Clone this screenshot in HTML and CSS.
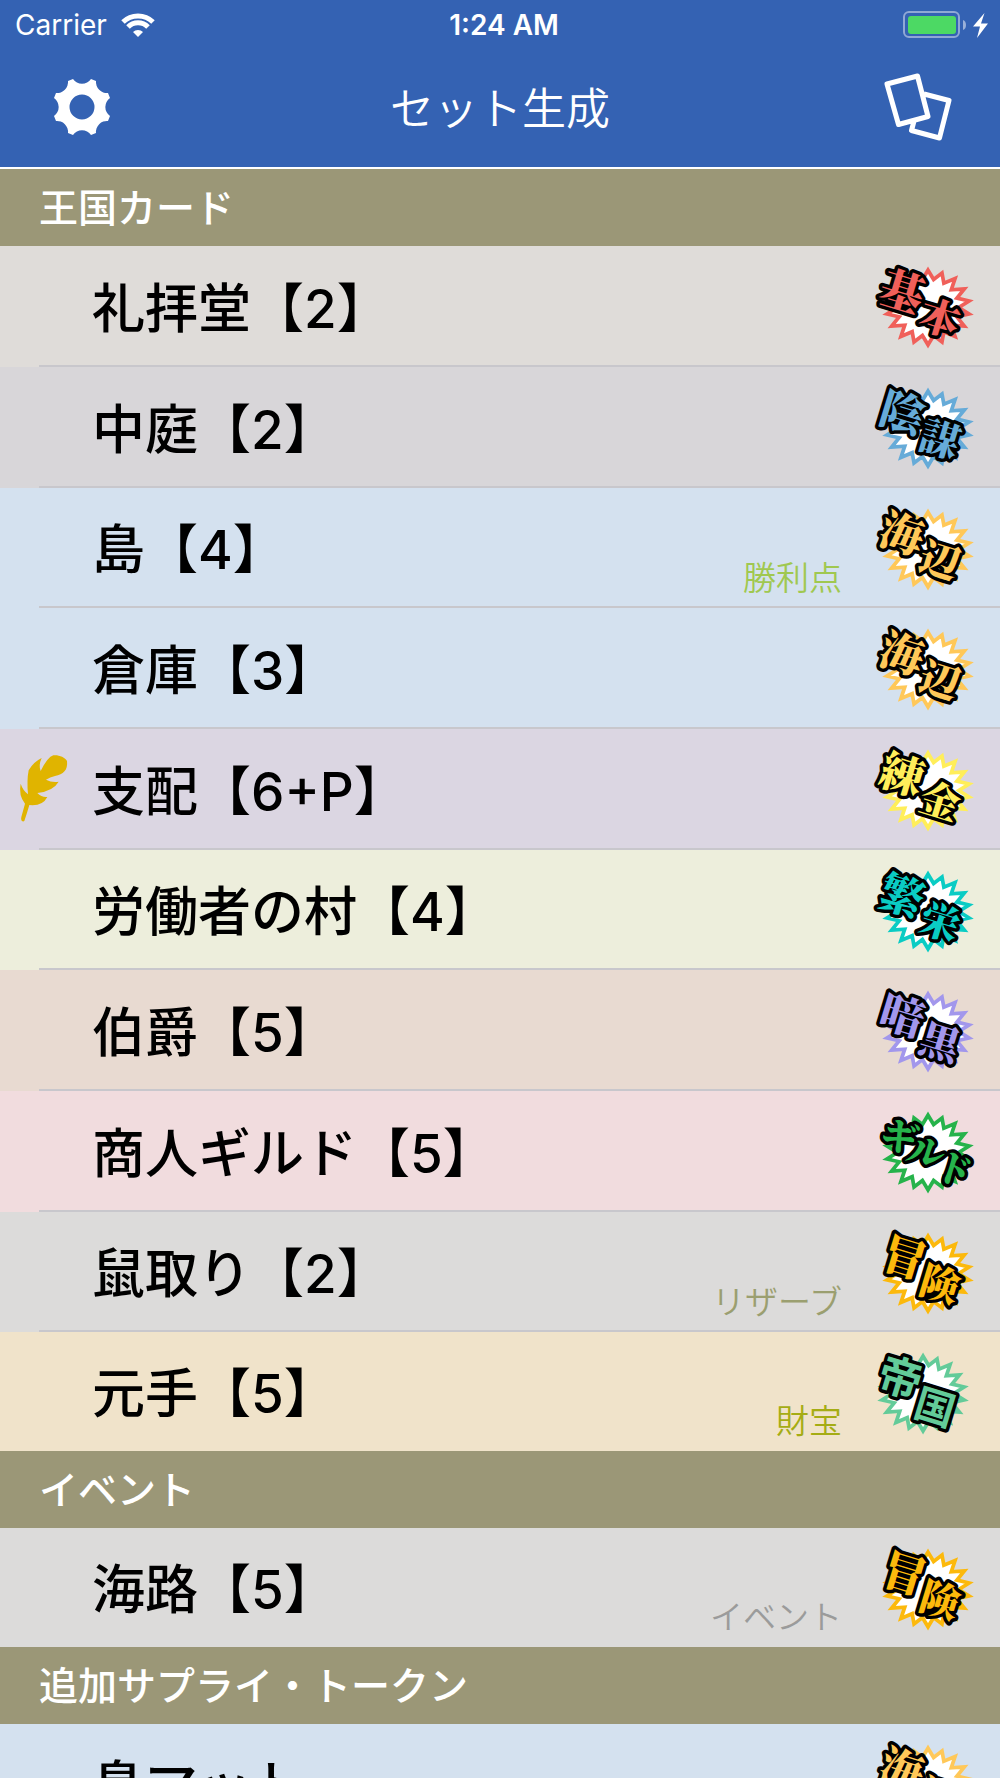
FILE: index.html
```html
<!DOCTYPE html>
<html lang="ja">
<head>
<meta charset="utf-8">
<meta name="viewport" content="width=device-width, initial-scale=1">
<title>セット生成</title>
<link rel="stylesheet" href="styles.css">
</head>
<body>
<svg class="defs" aria-hidden="true">
  <symbol id="burst" viewBox="-50 -50 100 100">
    <polygon transform="scale(.94)" points="0,-40 6,-30 15,-37 17,-26 29,-31 25,-19 39,-20 31,-10 44,-7 33,0 44,7 31,10 39,20 25,19 29,31 17,26 15,37 6,30 0,40 -6,30 -15,37 -17,26 -29,31 -25,19 -39,20 -31,10 -44,7 -33,0 -44,-7 -31,-10 -39,-20 -25,-19 -29,-31 -17,-26 -15,-37 -6,-30"/>
  </symbol>
</svg>
<div class="app">
  <header class="top">
    <div class="status">
      <div class="carrier">
        <span>Carrier</span>
        <svg width="34" height="24" viewBox="-17 -24 34 24" fill="none" stroke="#fff" stroke-width="5">
          <path d="M-15-15A21.5 21.5 0 0 1 15-15M-10-10A14 14 0 0 1 10-10"/>
          <path d="M0 0L-5-5A7 7 0 0 1 5-5Z" fill="#fff" stroke="none"/>
        </svg>
      </div>
      <div class="time">1:24 AM</div>
      <div class="battery">
        <svg width="86" height="28" viewBox="0 0 86 28">
          <rect x="1" y="1" width="55" height="25" rx="5" fill="none" stroke="#fff" stroke-opacity=".45" stroke-width="2"/>
          <rect x="5" y="5" width="48" height="18" rx="3" fill="#4cd964"/>
          <path d="M60 9q3 1 3 5t-3 5z" fill="#fff" fill-opacity=".5"/>
          <path d="M81.500 2L70 15.500h7L74 27 85 12.500h-7z" fill="#fff"/>
        </svg>
      </div>
    </div>
    <nav class="nav">
      <button class="icon" type="button" aria-label="設定">
        <svg width="64" height="64" viewBox="-32 -32 64 64" fill="#fff" fill-rule="evenodd">
          <path d="M-9-28A11 11 0 0 0 9-28L14-26A11 11 0 0 0 26-14L28-9A11 11 0 0 0 28 9L26 14A11 11 0 0 0 14 26L9 28A11 11 0 0 0-9 28L-14 26A11 11 0 0 0-26 14L-28 9A11 11 0 0 0-28-9L-26-14A11 11 0 0 0-14-26ZM-12.500 0a12.500 12.500 0 1 0 25 0a12.500 12.500 0 1 0-25 0Z"/>
        </svg>
      </button>
      <h1>セット生成</h1>
      <button class="icon" type="button" aria-label="カード">
        <svg width="72" height="72" viewBox="882 70 72 72" fill="none" stroke="#fff" stroke-width="5" stroke-linejoin="round">
          <path d="M887 83L917.500 75L928 115.500L898.500 123.500ZM924 93L949 99.500L939.500 137L911.500 129.500L914 120"/>
        </svg>
      </button>
    </nav>
  </header>

  <main>
    <h2>王国カード</h2>
    <ul>
      <li class="base">
        <span class="mark"></span><span class="name">礼拝堂【2】</span><span class="kind"></span>
        <svg class="badge" viewBox="0 0 140 120"><use href="#burst" x="18" y="12" width="100" height="100"/><g><text transform="translate(43 43) rotate(17)">基</text><text class="second" transform="translate(81 70) rotate(17)">本</text></g></svg>
      </li>
      <li class="intrigue">
        <span class="mark"></span><span class="name">中庭【2】</span><span class="kind"></span>
        <svg class="badge" viewBox="0 0 140 120"><use href="#burst" x="18" y="12" width="100" height="100"/><g><text transform="translate(43 43) rotate(17)">陰</text><text class="second" transform="translate(81 70) rotate(17)">謀</text></g></svg>
      </li>
      <li class="seaside">
        <span class="mark"></span><span class="name">島【4】</span><span class="kind victory">勝利点</span>
        <svg class="badge" viewBox="0 0 140 120"><use href="#burst" x="18" y="12" width="100" height="100"/><g><text transform="translate(43 43) rotate(17)">海</text><text class="second" transform="translate(81 70) rotate(17)">辺</text></g></svg>
      </li>
      <li class="seaside">
        <span class="mark"></span><span class="name">倉庫【3】</span><span class="kind"></span>
        <svg class="badge" viewBox="0 0 140 120"><use href="#burst" x="18" y="12" width="100" height="100"/><g><text transform="translate(43 43) rotate(17)">海</text><text class="second" transform="translate(81 70) rotate(17)">辺</text></g></svg>
      </li>
      <li class="alchemy">
        <span class="mark">
          <svg width="52" height="70" viewBox="54 101 156 210" fill="#e0b400"><path d="M160 105C175 103 195 110 201 122C204 150 190 162 165 167Q150 170 138 178Q155 187 176 184Q160 212 112 218Q125 232 142 230Q128 258 88 254Q82 275 73 302Q69 305 65 301Q62 298 64 290L75 250Q55 225 62 190Q68 209 84 222Q80 180 86 150Q100 125 125 113Q115 135 122 152Q143 110 160 105Z"/></svg>
        </span><span class="name">支配【6+P】</span><span class="kind"></span>
        <svg class="badge" viewBox="0 0 140 120"><use href="#burst" x="18" y="12" width="100" height="100"/><g><text transform="translate(43 43) rotate(17)">練</text><text class="second" transform="translate(81 70) rotate(17)">金</text></g></svg>
      </li>
      <li class="prosperity">
        <span class="mark"></span><span class="name">労働者の村【4】</span><span class="kind"></span>
        <svg class="badge" viewBox="0 0 140 120"><use href="#burst" x="18" y="12" width="100" height="100"/><g><text transform="translate(43 43) rotate(17)">繁</text><text class="second" transform="translate(81 70) rotate(17)">栄</text></g></svg>
      </li>
      <li class="dark">
        <span class="mark"></span><span class="name">伯爵【5】</span><span class="kind"></span>
        <svg class="badge" viewBox="0 0 140 120"><use href="#burst" x="18" y="12" width="100" height="100"/><g><text transform="translate(43 43) rotate(17)">暗</text><text class="second" transform="translate(81 70) rotate(17)">黒</text></g></svg>
      </li>
      <li class="guilds">
        <span class="mark"></span><span class="name">商人ギルド【5】</span><span class="kind"></span>
        <svg class="badge" viewBox="0 0 140 120"><use href="#burst" x="18" y="12" width="100" height="100"/><g class="kana"><text transform="translate(40 44) rotate(17)">ギ</text><text transform="translate(67 59) rotate(17)">ル</text><text transform="translate(95 77) rotate(17)">ド</text></g></svg>
      </li>
      <li class="adventures">
        <span class="mark"></span><span class="name">鼠取り【2】</span><span class="kind reserve">リザーブ</span>
        <svg class="badge" viewBox="0 0 140 120"><use href="#burst" x="18" y="12" width="100" height="100"/><g><text transform="translate(45 43) rotate(17)">冒</text><text class="second" transform="translate(81 70) rotate(17)">険</text></g></svg>
      </li>
      <li class="empires">
        <span class="mark"></span><span class="name">元手【5】</span><span class="kind treasure">財宝</span>
        <svg class="badge" viewBox="0 0 140 120"><use href="#burst" x="13" y="12" width="100" height="100"/><g class="gothic"><text transform="translate(41 43) rotate(17)">帝</text><text class="second" transform="translate(76 73) rotate(17)">国</text></g></svg>
      </li>
    </ul>

    <h2>イベント</h2>
    <ul>
      <li class="adventures">
        <span class="mark"></span><span class="name">海路【5】</span><span class="kind event">イベント</span>
        <svg class="badge" viewBox="0 0 140 120"><use href="#burst" x="18" y="12" width="100" height="100"/><g><text transform="translate(45 43) rotate(17)">冒</text><text class="second" transform="translate(81 70) rotate(17)">険</text></g></svg>
      </li>
    </ul>

    <h2>追加サプライ・トークン</h2>
    <ul>
      <li class="seaside">
        <span class="mark"></span><span class="name">島マット</span><span class="kind"></span>
        <svg class="badge" viewBox="0 0 140 120"><use href="#burst" x="18" y="12" width="100" height="100"/><g><text transform="translate(43 43) rotate(17)">海</text><text class="second" transform="translate(81 70) rotate(17)">辺</text></g></svg>
      </li>
    </ul>
  </main>
</div>
</body>
</html>
```
FILE: styles.css
```css
* { box-sizing: border-box; }

body {
  margin: 0;
  font-family: Inter, "Noto Sans CJK JP", sans-serif;
  color: #000;
}

.defs { display: none; }

.app {
  height: 100vh;
  display: flex;
  flex-direction: column;
  overflow: hidden;
}

.top {
  flex: none;
  background: #3462b3;
  color: #fff;
  border-bottom: 2px solid #fff;
}

.status {
  display: grid;
  grid-template-columns: 1fr auto 1fr;
  align-items: center;
  height: 50px;
  padding: 0 11px 0 15px;
  font-size: 28px;
  line-height: 50px;
}

.carrier {
  display: flex;
  align-items: center;
  gap: 14px;
}

.time {
  padding-left: 4px;
  font-weight: 600;
}

.battery {
  display: flex;
  justify-content: flex-end;
}

.nav {
  display: flex;
  align-items: center;
  justify-content: space-between;
  height: 117px;
  padding: 0 46px 4px 50px;
}

.nav h1 {
  margin: 0;
  padding: 4px 0 0 4px;
  font-size: 44px;
  font-weight: 350;
  line-height: 64px;
}

.icon {
  padding: 0;
  border: 0;
  background: none;
}

.icon svg { display: block; }

main {
  flex: 1;
  min-height: 0;
  overflow-y: auto;
  scrollbar-width: none;
}

h2 {
  margin: 0;
  height: 77px;
  padding-left: 39px;
  background: #9b9777;
  color: #fff;
  font-size: 39px;
  font-weight: 500;
  line-height: 78px;
}

ul {
  margin: 0;
  padding: 0;
  list-style: none;
}

li {
  display: grid;
  grid-template-columns: 92px auto 1fr 158px;
  align-items: center;
  height: 121px;
  background: linear-gradient(#c8c7cc, #c8c7cc) 39px 100% / 100% 2px no-repeat var(--tint);
}

li:nth-child(3n) { height: 120px; }

li:last-child {
  height: 119px;
  background: var(--tint);
}

.mark { padding: 0 0 2px 18px; }
.mark svg { display: block; }

.name {
  padding-top: 4px;
  font-size: 53px;
  font-weight: 500;
  line-height: 80px;
  white-space: nowrap;
}

.kind {
  align-self: end;
  padding-bottom: 6px;
  font-size: 33px;
  font-weight: 350;
  line-height: 48px;
  text-align: right;
}

.victory { color: #a0c850; }
.reserve { color: #9b9f70; }
.treasure { color: #a5ac14; }
.event { color: #9b9b9b; }

.badge {
  align-self: start;
  justify-self: end;
  width: 140px;
  height: 119px;
  fill: #fff;
  stroke: var(--ink);
  stroke-width: 4px;
}

.badge g {
  fill: var(--ink);
  stroke: #000;
  stroke-width: 7px;
  stroke-linejoin: round;
  paint-order: stroke;
  font-family: "Noto Serif CJK JP", "Noto Sans CJK JP", sans-serif;
  font-size: 44px;
  font-weight: 900;
  text-anchor: middle;
  dominant-baseline: central;
}

.badge .second { font-size: 40px; }
.badge .kana { font-size: 37px; }

.badge .gothic {
  font-family: "Noto Sans CJK JP", sans-serif;
  font-weight: 700;
}

.base { --tint: #dfdcd9; --ink: #f0605a; }
.intrigue { --tint: #d8d6d9; --ink: #66abd8; }
.seaside { --tint: #d4e1ef; --ink: #ffc859; }
.alchemy { --tint: #dbd6e2; --ink: #ffee5a; }
.prosperity { --tint: #edeedc; --ink: #0accc4; }
.dark { --tint: #e8dad1; --ink: #a297ec; }
.guilds { --tint: #f1dcde; --ink: #26b34b; }
.adventures { --tint: #dcdbda; --ink: #fcb90c; }
.empires { --tint: #f0e3ca; --ink: #63cb99; }
```
